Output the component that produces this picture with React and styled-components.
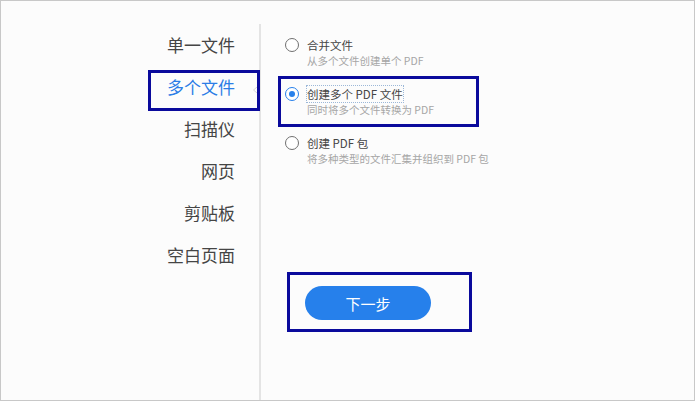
import React from "react";
import styled, { createGlobalStyle } from "styled-components";

const GlobalStyle = createGlobalStyle`
  html, body { margin: 0; padding: 0; background: #fcfcfc; }
  * { box-sizing: border-box; }
  body { font-family: "Noto Sans CJK SC", "Noto Sans", sans-serif; }
`;

const navItems = ["单一文件", "多个文件", "扫描仪", "网页", "剪贴板", "空白页面"];

const options = [
  { title: "合并文件", desc: "从多个文件创建单个 PDF" },
  { title: "创建多个 PDF 文件", desc: "同时将多个文件转换为 PDF", checked: true },
  { title: "创建 PDF 包", desc: "将多种类型的文件汇集并组织到 PDF 包" },
];

const Frame = styled.div`
  width: 695px;
  height: 401px;
  border: 1px solid #c8c8c8;
  background: #fcfcfc;
  display: flex;
  overflow: hidden;
`;

const Nav = styled.nav`
  width: 260px;
  margin-top: 23px;
  border-right: 2px solid #e4e4e4;
  display: flex;
  flex-direction: column;
`;

const NavItem = styled.div`
  position: relative;
  height: 42px;
  line-height: 42px;
  padding-right: 24px;
  text-align: right;
  font-size: 17px;
  color: ${(p) => (p.$active ? "#2b7de6" : "#454545")};
`;

const Mark = styled.span`
  position: absolute;
  border: 3px solid #0a0a9c;
  pointer-events: none;
  left: ${(p) => p.$left}px;
  top: ${(p) => p.$top}px;
  width: ${(p) => p.$w}px;
  height: ${(p) => p.$h}px;
`;

const Notch = styled.svg`
  position: absolute;
  right: -1px;
  top: 18px;
`;

const Panel = styled.section`
  flex: 1;
  padding: 35px 0 0 24px;
  display: flex;
  flex-direction: column;
`;

const OptionList = styled.div`
  display: flex;
  flex-direction: column;
  gap: 16px;
`;

const Option = styled.label`
  position: relative;
  display: flex;
  align-items: flex-start;
  gap: 8px;
  width: 190px;
`;

const Radio = styled.span`
  width: 14px;
  height: 14px;
  margin-top: 2px;
  border-radius: 50%;
  border: 1.5px solid ${(p) => (p.$checked ? "#2680eb" : "#707070")};
  background: #fff;
  display: flex;
  align-items: center;
  justify-content: center;
  flex-shrink: 0;
  &::after {
    content: "";
    width: 6px;
    height: 6px;
    border-radius: 50%;
    background: ${(p) => (p.$checked ? "#2680eb" : "transparent")};
  }
`;

const OptionText = styled.div`
  display: flex;
  flex-direction: column;
  align-items: flex-start;
`;

const Title = styled.span`
  font-size: 11.5px;
  line-height: 16px;
  margin-top: 1px;
  color: #454545;
  white-space: nowrap;
  outline: ${(p) => (p.$focus ? "1px dotted #9cb8d8" : "none")};
`;

const Desc = styled.span`
  font-size: 10.5px;
  line-height: 16px;
  color: #a6a6a6;
  white-space: nowrap;
`;

const NextButton = styled.button`
  position: relative;
  margin: 119px 0 0 20px;
  width: 126px;
  height: 34px;
  border: none;
  border-radius: 17px;
  background: #2680eb;
  color: #fff;
  font-family: inherit;
  font-size: 15px;
  font-weight: 400;
  align-self: flex-start;
`;

export default function App() {
  return (
    <>
      <GlobalStyle />
      <Frame>
        <Nav>
          {navItems.map((label) => {
            const active = label === "多个文件";
            return (
              <NavItem key={label} $active={active}>
                {label}
                {active && (
                  <>
                    <Notch width="8" height="12" viewBox="0 0 8 12">
                      <path d="M8 0.5 L1.5 6 L8 11.5" fill="#fcfcfc" stroke="#d6d6d6" strokeWidth="1" />
                    </Notch>
                    <Mark $left={147} $top={4} $w={112} $h={41} />
                  </>
                )}
              </NavItem>
            );
          })}
        </Nav>
        <Panel>
          <OptionList>
            {options.map((o) => (
              <Option key={o.title}>
                <Radio $checked={o.checked} />
                <OptionText>
                  <Title $focus={o.checked}>{o.title}</Title>
                  <Desc>{o.desc}</Desc>
                </OptionText>
                {o.checked && <Mark $left={-7} $top={-9} $w={201} $h={51} />}
              </Option>
            ))}
          </OptionList>
          <NextButton>
            下一步
            <Mark $left={-18} $top={-14} $w={185} $h={60} />
          </NextButton>
        </Panel>
      </Frame>
    </>
  );
}
